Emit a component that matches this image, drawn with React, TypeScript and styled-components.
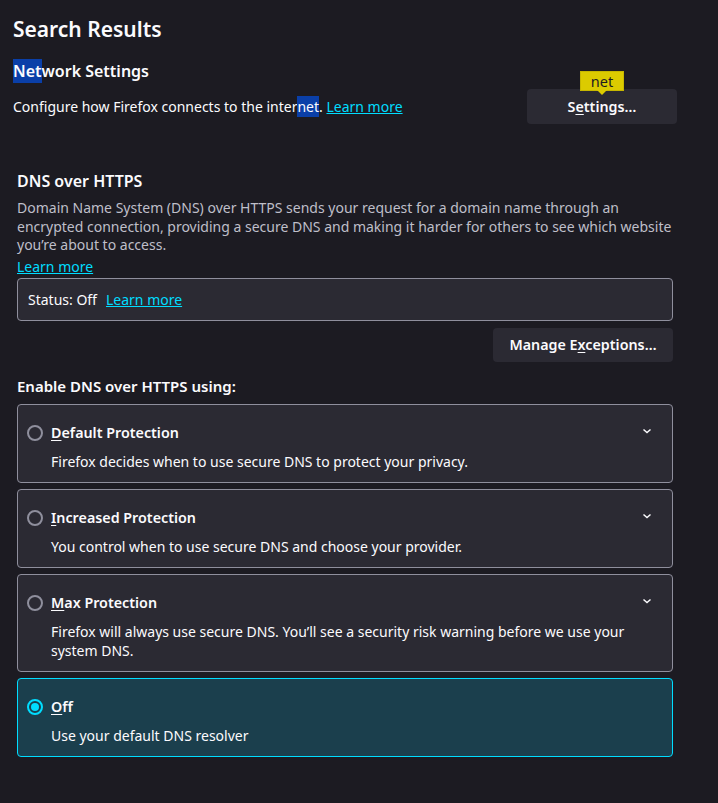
import React from "react";
import styled, { createGlobalStyle } from "styled-components";

const Global = createGlobalStyle`
  html, body { margin: 0; padding: 0; background: #1c1b22; }
  body {
    color: #fbfbfe;
    font-family: "Noto Sans", "Open Sans", sans-serif;
    font-size: 14px;
    -webkit-font-smoothing: antialiased;
  }
`;

const Page = styled.div`
  width: 664px;
  padding: 14px 0 40px 13px;
  box-sizing: content-box;
`;

const Title = styled.h1`
  margin: 0;
  font-size: 21px;
  line-height: 30px;
  font-weight: 600;
`;

const GroupTitle = styled.h2`
  margin: 16px 0 0;
  font-size: 16px;
  line-height: 22px;
  font-weight: 600;
`;

const Mark = styled.span`
  background: #0a3fa8;
  padding: 1px 0;
`;

const Row = styled.div`
  display: flex;
  align-items: center;
  justify-content: space-between;
  margin-top: 7px;
`;

const Text = styled.span`
  font-size: 14px;
  line-height: 20px;
`;

const Link = styled.a`
  color: #00ddff;
  text-decoration: underline;
  cursor: pointer;
`;

const Button = styled.button<{ $w: number; $h: number }>`
  position: relative;
  width: ${(p) => p.$w}px;
  height: ${(p) => p.$h}px;
  background: #2b2a33;
  border: none;
  border-radius: 4px;
  color: #fbfbfe;
  font-family: inherit;
  font-size: 14.3px;
  font-weight: 600;
  padding: 0;
`;

const Key = styled.u`
  text-decoration: underline;
  text-underline-offset: 2px;
`;

const Tooltip = styled.span`
  position: absolute;
  left: 53px;
  top: -18px;
  width: 44px;
  height: 20px;
  box-sizing: border-box;
  background: #dccb00;
  border: 1px solid #c7b700;
  color: #1c1b22;
  font-size: 14.5px;
  font-weight: 400;
  line-height: 18px;
  text-align: center;
  &::after {
    content: "";
    position: absolute;
    left: 50%;
    bottom: -5px;
    margin-left: -5px;
    border-left: 5px solid transparent;
    border-right: 5px solid transparent;
    border-top: 5px solid #dccb00;
  }
`;

const Section = styled.section`
  margin: 45px 0 0 4px;
  width: 656px;
`;

const SubTitle = styled.h3`
  margin: 0;
  font-size: 16px;
  line-height: 24px;
  font-weight: 600;
`;

const Desc = styled.p`
  margin: 6px 0 0;
  color: #bfbfc9;
  font-size: 14px;
  line-height: 18.5px;
`;

const DescLink = styled.div`
  margin-top: 2px;
  font-size: 14px;
  line-height: 19px;
`;

const StatusBox = styled.div`
  margin-top: 2px;
  height: 43px;
  box-sizing: border-box;
  border: 1px solid #8f8f9d;
  border-radius: 4px;
  background: #2b2a33;
  display: flex;
  align-items: center;
  gap: 9px;
  padding: 0 10px;
  font-size: 14px;
`;

const RightRow = styled.div`
  display: flex;
  justify-content: flex-end;
  margin-top: 7px;
`;

const OptionsTitle = styled.h4`
  margin: 13px 0 0;
  font-size: 15px;
  line-height: 22px;
  font-weight: 600;
`;

const Cards = styled.div`
  margin-top: 7px;
  display: flex;
  flex-direction: column;
  gap: 6px;
`;

const Card = styled.div<{ $selected?: boolean }>`
  position: relative;
  border: 1px solid ${(p) => (p.$selected ? "#00ddff" : "#8f8f9d")};
  background: ${(p) => (p.$selected ? "#1b3f4d" : "#2b2a33")};
  border-radius: 4px;
  padding: 18px 9px 11px;
`;

const CardHead = styled.div`
  display: flex;
  align-items: center;
  gap: 8px;
  height: 20px;
`;

const Radio = styled.span<{ $checked?: boolean }>`
  width: 16px;
  height: 16px;
  box-sizing: border-box;
  border-radius: 50%;
  border: 2px solid ${(p) => (p.$checked ? "#00ddff" : "#8f8f9d")};
  display: flex;
  align-items: center;
  justify-content: center;
  flex: none;
  &::after {
    content: "";
    width: 8px;
    height: 8px;
    border-radius: 50%;
    background: ${(p) => (p.$checked ? "#00ddff" : "transparent")};
  }
`;

const CardLabel = styled.span`
  font-size: 14.3px;
  font-weight: 600;
  line-height: 20px;
`;

const CardDesc = styled.p`
  margin: 9px 0 0 24px;
  font-size: 14px;
  line-height: 19px;
  color: #fbfbfe;
`;

const Chevron = styled.svg`
  position: absolute;
  right: 20px;
  top: 22px;
`;

const ChevronIcon = () => (
  <Chevron width="10" height="8" viewBox="0 0 10 8">
    <path d="M1.5 2.5 L5 5.5 L8.5 2.5" fill="none" stroke="#fbfbfe" strokeWidth="1.5" />
  </Chevron>
);

type Opt = { key: string; rest: string; desc: string; selected?: boolean; chevron?: boolean };

const options: Opt[] = [
  { key: "D", rest: "efault Protection", desc: "Firefox decides when to use secure DNS to protect your privacy.", chevron: true },
  { key: "I", rest: "ncreased Protection", desc: "You control when to use secure DNS and choose your provider.", chevron: true },
  {
    key: "M",
    rest: "ax Protection",
    desc: "Firefox will always use secure DNS. You\u2019ll see a security risk warning before we use your system DNS.",
    chevron: true,
  },
  { key: "O", rest: "ff", desc: "Use your default DNS resolver", selected: true },
];

export default function App() {
  return (
    <Page>
      <Global />
      <Title>Search Results</Title>
      <GroupTitle>
        <Mark>Net</Mark>work Settings
      </GroupTitle>
      <Row>
        <Text>
          Configure how Firefox connects to the inter<Mark>net</Mark>. <Link>Learn more</Link>
        </Text>
        <Button $w={150} $h={35}>
          <Tooltip>net</Tooltip>
          S<Key>e</Key>ttings…
        </Button>
      </Row>
      <Section>
        <SubTitle>DNS over HTTPS</SubTitle>
        <Desc>
          Domain Name System (DNS) over HTTPS sends your request for a domain name through an encrypted connection,
          providing a secure DNS and making it harder for others to see which website you’re about to access.
        </Desc>
        <DescLink>
          <Link>Learn more</Link>
        </DescLink>
        <StatusBox>
          <span>Status: Off</span>
          <Link>Learn more</Link>
        </StatusBox>
        <RightRow>
          <Button $w={180} $h={34}>
            Manage E<Key>x</Key>ceptions…
          </Button>
        </RightRow>
        <OptionsTitle>Enable DNS over HTTPS using:</OptionsTitle>
        <Cards>
          {options.map((o) => (
            <Card key={o.key} $selected={o.selected}>
              <CardHead>
                <Radio $checked={o.selected} />
                <CardLabel>
                  <Key>{o.key}</Key>
                  {o.rest}
                </CardLabel>
              </CardHead>
              {o.chevron && <ChevronIcon />}
              <CardDesc>{o.desc}</CardDesc>
            </Card>
          ))}
        </Cards>
      </Section>
    </Page>
  );
}
